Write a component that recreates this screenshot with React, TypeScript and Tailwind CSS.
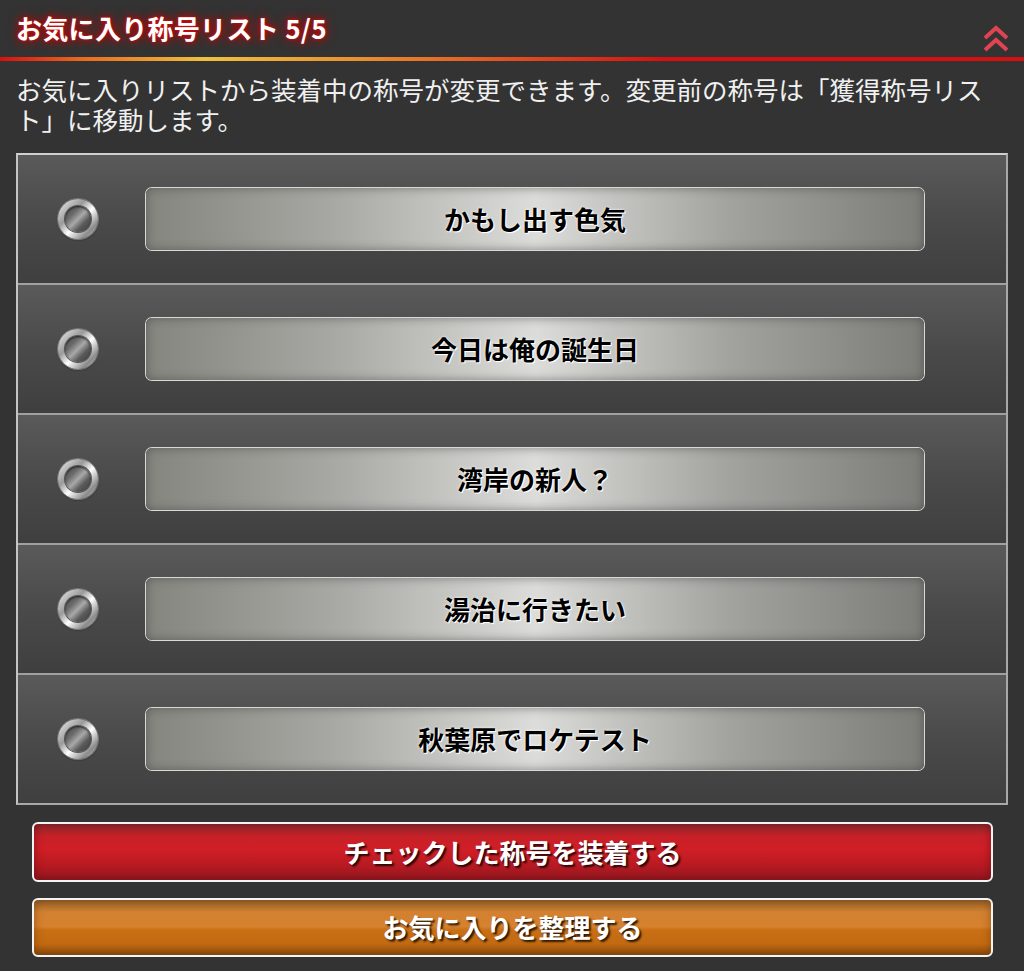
import React from "react";

const titles = ["かもし出す色気", "今日は俺の誕生日", "湾岸の新人？", "湯治に行きたい", "秋葉原でロケテスト"];

function Radio() {
  return (
    <div className="w-[40px] h-[40px] rounded-full flex items-center justify-center shrink-0 bg-[linear-gradient(135deg,#f4f4f4_0%,#9a9a9a_35%,#ffffff_55%,#8a8a8a_80%,#d0d0d0_100%)] shadow-[0_0_0_1px_#777,0_1px_2px_rgba(0,0,0,0.5)]">
      <div className="w-[26px] h-[26px] rounded-full bg-[linear-gradient(135deg,#4a4a4a_0%,#6a6a6a_30%,#a8a8a8_50%,#5a5a5a_70%,#3e3e3e_100%)] shadow-[inset_0_1px_2px_rgba(0,0,0,0.7),0_0_0_1px_#555]" />
    </div>
  );
}

function Chevrons() {
  return (
    <svg width="28" height="30" viewBox="0 0 28 30" fill="none">
      <path d="M3 14 L14 4 L25 14" stroke="#e04450" strokeWidth="4" strokeLinejoin="miter" />
      <path d="M3 26 L14 16 L25 26" stroke="#e04450" strokeWidth="4" strokeLinejoin="miter" />
    </svg>
  );
}

export default function App() {
  return (
    <div className="w-[1024px] h-[971px] bg-[#333333] overflow-hidden" style={{ fontFamily: '"Noto Sans CJK JP", "Noto Sans", sans-serif' }}>
      <div className="h-[57px] flex items-center justify-between pl-[16px] pr-[14px]">
        <div className="text-white font-bold text-[26px] leading-none -mt-[2px] tracking-[0.3px] [text-shadow:0_0_3px_#e01010,0_0_8px_#c00000,0_0_12px_rgba(200,0,0,0.7)]">お気に入り称号リスト 5/5</div>
        <div className="mt-[20px]"><Chevrons /></div>
      </div>
      <div className="h-[4px] bg-[linear-gradient(90deg,#d81010_0%,#e86a20_8%,#f0c040_20%,#e89030_35%,#e05020_50%,#d41010_65%,#d41010_100%)]" />
      <div className="pl-[16px] pr-[28px] pt-[13px] text-[#f0f0f0] text-[25.5px] leading-[30px]">
        お気に入りリストから装着中の称号が変更できます。変更前の称号は「獲得称号リスト」に移動します。
      </div>
      <div className="mx-[16px] mt-[19px] border-2 border-[#a8a8a8] border-t-[#cfcfcf] border-l-[#c4c4c4] bg-[#a0a0a0]">
        {titles.map((t, i) => (
          <div key={i} className={`h-[128px] flex items-center pl-[40px] pr-[82px] bg-[linear-gradient(180deg,#5a5a5a_0%,#4a4a4a_50%,#3f3f3f_100%)] ${i > 0 ? "mt-[2px]" : ""}`}>
            <Radio />
            <div className="ml-[48px] flex-1 h-[62px] rounded-[6px] flex items-center justify-center bg-[linear-gradient(90deg,#85857f_0%,#a9a9a5_25%,#dcdcda_50%,#a2a29e_75%,#7c7c78_100%)] shadow-[inset_0_0_10px_rgba(60,60,55,0.55),0_0_0_1px_#d8d8d8]">
              <span className="text-black font-bold text-[26px] -mt-[2px] [text-shadow:1px_1px_0_#fff,0_0_3px_rgba(255,255,255,0.9)]">{t}</span>
            </div>
          </div>
        ))}
      </div>
      <div className="ml-[32px] mr-[31px] mt-[17px] flex flex-col gap-[16px]">
        <div className="h-[60px] rounded-[6px] border-2 border-[#f4f4f4] flex items-center justify-center bg-[linear-gradient(180deg,#8e2a2e_0%,#c82028_22%,#d01f26_45%,#bd1a22_70%,#941820_100%)] shadow-[inset_0_0_10px_rgba(90,10,15,0.6)]">
          <span className="text-white font-bold text-[26px] -mt-[2px] [text-shadow:2px_2px_2px_rgba(0,0,0,0.8)]">チェックした称号を装着する</span>
        </div>
        <div className="h-[59px] rounded-[6px] border-2 border-[#f4f4f4] flex items-center justify-center bg-[linear-gradient(180deg,#94602a_0%,#d28130_22%,#d6822f_48%,#c96f14_55%,#c26a12_80%,#8e4a0c_100%)] shadow-[inset_0_0_10px_rgba(100,50,10,0.55)]">
          <span className="text-white font-bold text-[26px] -mt-[2px] [text-shadow:2px_2px_2px_rgba(0,0,0,0.8)]">お気に入りを整理する</span>
        </div>
      </div>
    </div>
  );
}
